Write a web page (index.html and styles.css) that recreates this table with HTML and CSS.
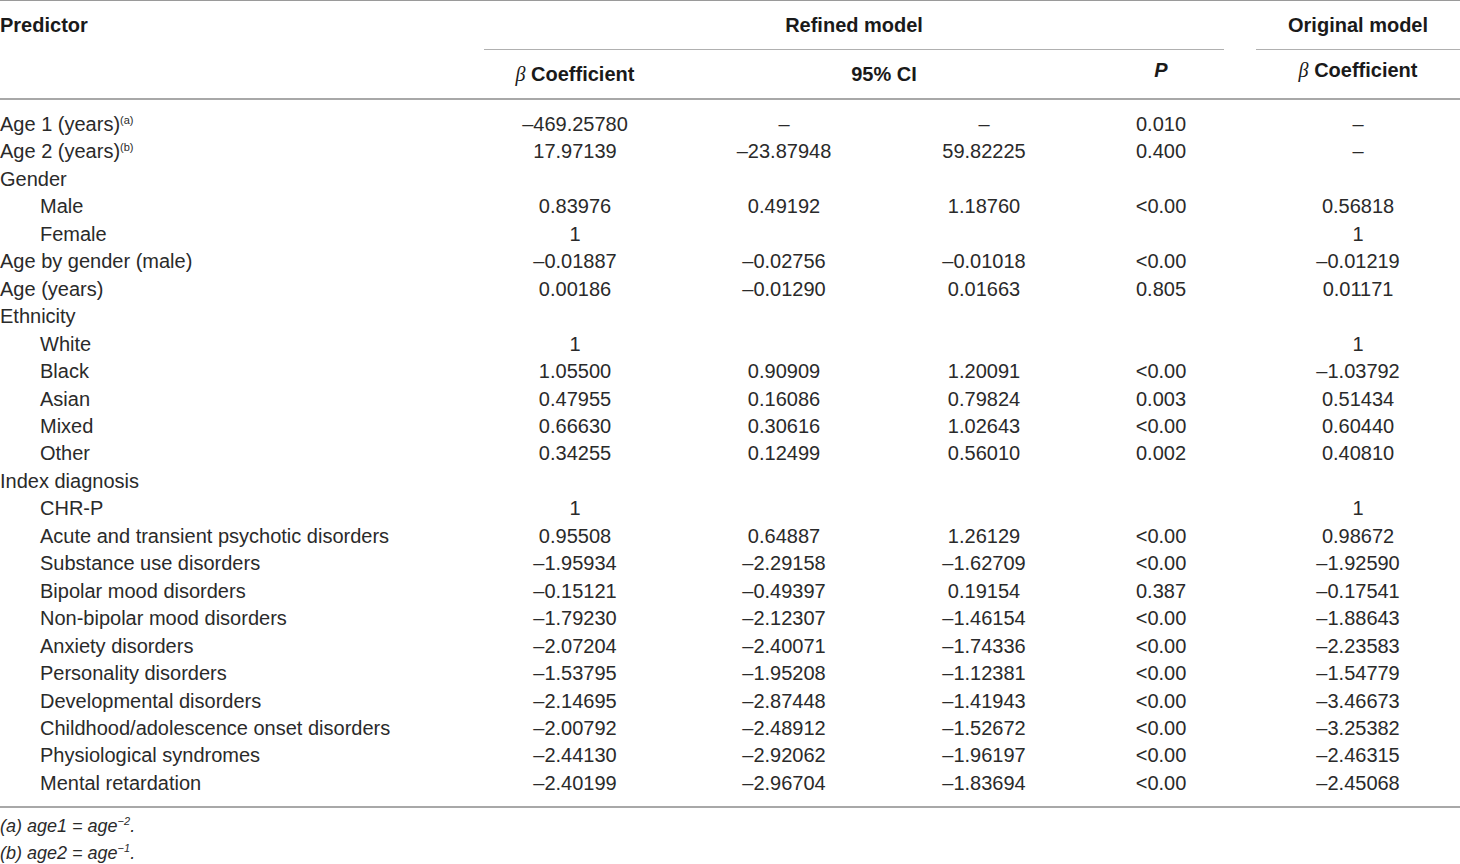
FILE: index.html
```html
<!DOCTYPE html>
<html lang="en">
<head>
<meta charset="utf-8">
<title>Predictor table</title>
<link rel="stylesheet" href="styles.css">
</head>
<body>
<div class="wrap">
<table class="tbl">
  <colgroup>
    <col class="c-pred">
    <col class="c-beta">
    <col class="c-lo">
    <col class="c-hi">
    <col class="c-p">
    <col class="c-orig">
  </colgroup>
  <thead>
    <tr class="h1">
      <th class="h-pred" rowspan="2">Predictor</th>
      <th class="h-group" colspan="4"><div class="uline uline-gap">Refined model</div></th>
      <th class="h-group"><div class="uline">Original model</div></th>
    </tr>
    <tr class="h2">
      <th class="h-sub"><i class="beta">β</i> Coefficient</th>
      <th class="h-sub h-ci" colspan="2">95% CI</th>
      <th class="h-sub h-up"><i>P</i></th>
      <th class="h-sub h-up"><i class="beta">β</i> Coefficient</th>
    </tr>
  </thead>
  <tbody>
    <tr class="first"><td>Age 1 (years)<sup>(a)</sup></td><td>–469.25780</td><td>–</td><td>–</td><td>0.010</td><td>–</td></tr>
    <tr><td>Age 2 (years)<sup>(b)</sup></td><td>17.97139</td><td>–23.87948</td><td>59.82225</td><td>0.400</td><td>–</td></tr>
    <tr><td>Gender</td><td></td><td></td><td></td><td></td><td></td></tr>
    <tr><td class="ind">Male</td><td>0.83976</td><td>0.49192</td><td>1.18760</td><td>&lt;0.00</td><td>0.56818</td></tr>
    <tr><td class="ind">Female</td><td>1</td><td></td><td></td><td></td><td>1</td></tr>
    <tr><td>Age by gender (male)</td><td>–0.01887</td><td>–0.02756</td><td>–0.01018</td><td>&lt;0.00</td><td>–0.01219</td></tr>
    <tr><td>Age (years)</td><td>0.00186</td><td>–0.01290</td><td>0.01663</td><td>0.805</td><td>0.01171</td></tr>
    <tr><td>Ethnicity</td><td></td><td></td><td></td><td></td><td></td></tr>
    <tr><td class="ind">White</td><td>1</td><td></td><td></td><td></td><td>1</td></tr>
    <tr><td class="ind">Black</td><td>1.05500</td><td>0.90909</td><td>1.20091</td><td>&lt;0.00</td><td>–1.03792</td></tr>
    <tr><td class="ind">Asian</td><td>0.47955</td><td>0.16086</td><td>0.79824</td><td>0.003</td><td>0.51434</td></tr>
    <tr><td class="ind">Mixed</td><td>0.66630</td><td>0.30616</td><td>1.02643</td><td>&lt;0.00</td><td>0.60440</td></tr>
    <tr><td class="ind">Other</td><td>0.34255</td><td>0.12499</td><td>0.56010</td><td>0.002</td><td>0.40810</td></tr>
    <tr><td>Index diagnosis</td><td></td><td></td><td></td><td></td><td></td></tr>
    <tr><td class="ind">CHR-P</td><td>1</td><td></td><td></td><td></td><td>1</td></tr>
    <tr><td class="ind">Acute and transient psychotic disorders</td><td>0.95508</td><td>0.64887</td><td>1.26129</td><td>&lt;0.00</td><td>0.98672</td></tr>
    <tr><td class="ind">Substance use disorders</td><td>–1.95934</td><td>–2.29158</td><td>–1.62709</td><td>&lt;0.00</td><td>–1.92590</td></tr>
    <tr><td class="ind">Bipolar mood disorders</td><td>–0.15121</td><td>–0.49397</td><td>0.19154</td><td>0.387</td><td>–0.17541</td></tr>
    <tr><td class="ind">Non-bipolar mood disorders</td><td>–1.79230</td><td>–2.12307</td><td>–1.46154</td><td>&lt;0.00</td><td>–1.88643</td></tr>
    <tr><td class="ind">Anxiety disorders</td><td>–2.07204</td><td>–2.40071</td><td>–1.74336</td><td>&lt;0.00</td><td>–2.23583</td></tr>
    <tr><td class="ind">Personality disorders</td><td>–1.53795</td><td>–1.95208</td><td>–1.12381</td><td>&lt;0.00</td><td>–1.54779</td></tr>
    <tr><td class="ind">Developmental disorders</td><td>–2.14695</td><td>–2.87448</td><td>–1.41943</td><td>&lt;0.00</td><td>–3.46673</td></tr>
    <tr><td class="ind">Childhood/adolescence onset disorders</td><td>–2.00792</td><td>–2.48912</td><td>–1.52672</td><td>&lt;0.00</td><td>–3.25382</td></tr>
    <tr><td class="ind">Physiological syndromes</td><td>–2.44130</td><td>–2.92062</td><td>–1.96197</td><td>&lt;0.00</td><td>–2.46315</td></tr>
    <tr class="last"><td class="ind">Mental retardation</td><td>–2.40199</td><td>–2.96704</td><td>–1.83694</td><td>&lt;0.00</td><td>–2.45068</td></tr>
  </tbody>
</table>
<div class="notes">
  <p>(a) age1 = age<sup>−2</sup>.</p>
  <p>(b) age2 = age<sup>−1</sup>.</p>
</div>
</div>
</body>
</html>
```
FILE: styles.css
```css
html, body {
  margin: 0;
  padding: 0;
  background: #ffffff;
}
body {
  font-family: "Liberation Sans", Arial, sans-serif;
  color: #2a2a2a;
  font-size: 20px;
}
.wrap {
  width: 1460px;
}
.tbl {
  width: 1460px;
  border-collapse: collapse;
  table-layout: fixed;
  border-top: 1px solid #9a9a9a;
  border-bottom: 2px solid #a8a8a8;
}
.c-pred { width: 484px; }
.c-beta { width: 182px; }
.c-lo { width: 236px; }
.c-hi { width: 164px; }
.c-p { width: 190px; }
.c-orig { width: 204px; }

thead {
  border-bottom: 2px solid #a8a8a8;
}
th {
  font-weight: bold;
  color: #1a1a1a;
  padding: 0;
  line-height: 24px;
}
.h-pred {
  text-align: left;
  vertical-align: top;
  padding-top: 12px;
}
.h-group {
  text-align: center;
  vertical-align: top;
}
.uline {
  padding: 12px 0 12px;
  border-bottom: 1px solid #b0b0b0;
}
.uline-gap {
  margin-right: 32px;
}
.h-sub {
  text-align: center;
  vertical-align: top;
  padding-top: 12px;
  padding-bottom: 12px;
}
.h-up {
  padding-top: 8px;
  padding-bottom: 16px;
}
.h-ci {
  padding-left: 36px;
}
.beta {
  font-family: "Liberation Serif", "Times New Roman", serif;
  font-weight: normal;
  font-style: italic;
}
td {
  padding: 0;
  line-height: 27.46px;
  text-align: center;
  white-space: nowrap;
}
td:first-child {
  text-align: left;
}
td.ind {
  padding-left: 40px;
}
tr.first td {
  padding-top: 11px;
}
tr.last td {
  padding-bottom: 9px;
}
td sup {
  font-size: 11px;
  line-height: 0;
  vertical-align: 7px;
}
.notes {
  padding-top: 5px;
}
.notes p {
  margin: 0;
  font-style: italic;
  font-size: 18px;
  line-height: 27px;
}
.notes sup {
  font-size: 11px;
  line-height: 0;
  vertical-align: 7px;
}
```
